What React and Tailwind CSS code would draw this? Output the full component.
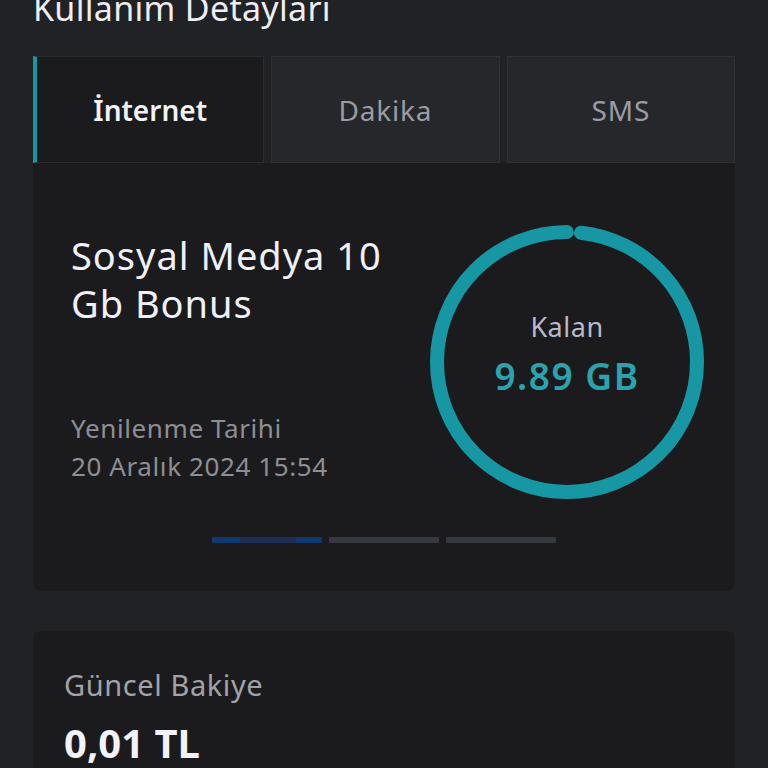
import React from "react";

const tabs = [
  { key: "internet", label: "İnternet" },
  { key: "dakika", label: "Dakika" },
  { key: "sms", label: "SMS" },
];

function UsageRing() {
  const size = 274;
  const stroke = 14;
  const r = (size - stroke) / 2;
  const c = 2 * Math.PI * r;
  // caps nearly touch, leaving a small notch just right of the top
  const arc = c - stroke - 0.6;
  return (
    <svg width={size} height={size} viewBox={`0 0 ${size} ${size}`}>
      <circle
        cx={size / 2}
        cy={size / 2}
        r={r}
        fill="none"
        stroke="#1797a3"
        strokeWidth={stroke}
        strokeLinecap="round"
        strokeDasharray={`${arc} ${c}`}
        strokeDashoffset={-(stroke / 2 + 7)}
        transform={`rotate(-90 ${size / 2} ${size / 2})`}
      />
    </svg>
  );
}

export default function App() {
  const active = "internet";

  return (
    <div className="h-[768px] w-[768px] overflow-hidden bg-[#212225] font-['Noto_Sans',sans-serif]">
      <div className="px-[33px]">
        <h1 className="mt-[-13px] text-[34px] leading-[42px] tracking-[0.3px] text-[#eeeef4]">Kullanım Detayları</h1>

        <div className="mt-[27px] flex gap-[7px]">
          {tabs.map((tab) => {
            const isActive = tab.key === active;
            return (
              <div
                key={tab.key}
                className={
                  isActive
                    ? "flex h-[107px] flex-1 items-center justify-center border border-l-[4px] border-[#2a2c30] border-l-[#1797a3] bg-[#1b1b1d] text-[28px] font-semibold text-[#f2f2f7]"
                    : "flex h-[107px] flex-1 items-center justify-center border border-[#2e3034] bg-[#25272b] text-[28px] tracking-[0.8px] text-[#9a9ca3]"
                }
              >
                {tab.label}
              </div>
            );
          })}
        </div>

        <div className="rounded-b-[8px] bg-[#1b1b1d] pb-[48px]">
          <div className="flex justify-between pl-[38px] pr-[31px] pt-[62px]">
            <div className="mt-[6px] flex flex-col">
              <div className="w-[340px] text-[38px] leading-[48px] tracking-[1px] text-[#f0f0f8]">Sosyal Medya 10 Gb Bonus</div>
              <div className="mt-[82px] text-[26px] leading-[38px] tracking-[0.6px] text-[#8d8f94]">
                <div>Yenilenme Tarihi</div>
                <div>20 Aralık 2024 15:54</div>
              </div>
            </div>
            <div className="relative h-[274px] w-[274px]">
              <UsageRing />
              <div className="absolute inset-0 flex flex-col items-center justify-center pb-[16px]">
                <div className="text-[27px] leading-[36px] tracking-[0.5px] text-[#b9b9c8]">Kalan</div>
                <div className="mt-[8px] text-[37px] font-semibold leading-[46px] tracking-[1.5px] text-[#2ba3ae]">9.89 GB</div>
              </div>
            </div>
          </div>

          <div className="mt-[38px] flex justify-center gap-[7px]">
            <div className="flex h-[6px] w-[110px] rounded-[1px] bg-[#0e3a70]">
              <div className="ml-[28px] h-full w-[56px] bg-[#1e2d54]" />
            </div>
            <div className="h-[6px] w-[110px] rounded-[1px] bg-[#35383d]" />
            <div className="h-[6px] w-[110px] rounded-[1px] bg-[#35383d]" />
          </div>
        </div>

        <div className="mt-[40px] rounded-t-[8px] bg-[#1b1b1d] px-[31px] pt-[34px] pb-[40px]">
          <div className="text-[29px] leading-[40px] tracking-[0.6px] text-[#a2a2a8]">Güncel Bakiye</div>
          <div className="mt-[14px] text-[40px] font-bold leading-[48px] text-[#f2f2f8]">0,01 TL</div>
        </div>
      </div>
    </div>
  );
}
